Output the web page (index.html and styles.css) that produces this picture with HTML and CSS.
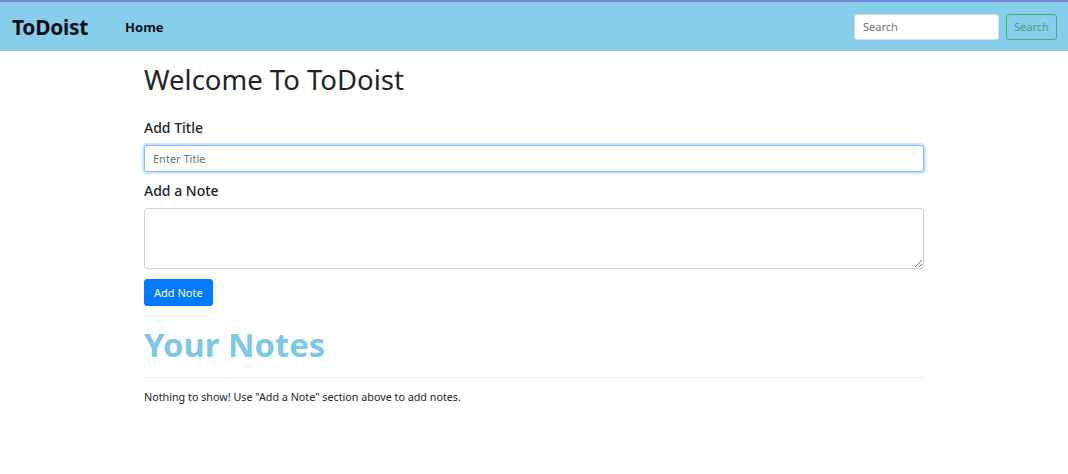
FILE: index.html
```html
<!DOCTYPE html>
<html lang="en">
<head>
<meta charset="utf-8">
<title>ToDoist</title>
<link rel="stylesheet" href="styles.css">
</head>
<body>
<nav class="navbar">
  <a class="brand" href="#">ToDoist</a>
  <a class="nav-link" href="#">Home</a>
  <form class="search">
    <input class="search-input" type="text" placeholder="Search">
    <button class="search-btn" type="button">Search</button>
  </form>
</nav>
<main class="container">
  <h1 class="title">Welcome To ToDoist</h1>
  <div class="group">
    <label class="label">Add Title</label>
    <input class="field field-focus" type="text" placeholder="Enter Title">
  </div>
  <div class="group group-note">
    <label class="label">Add a Note</label>
    <textarea class="field area"></textarea>
  </div>
  <button class="btn-primary" type="button">Add Note</button>
  <h2 class="notes-title">Your Notes</h2>
  <hr class="rule">
  <p class="empty">Nothing to show! Use "Add a Note" section above to add notes.</p>
</main>
</body>
</html>
```

FILE: styles.css
```css
* { box-sizing: border-box; }
body {
  margin: 0;
  font-family: "Noto Sans", "Open Sans", sans-serif;
  color: #212529;
  background: #fff;
}
.navbar {
  display: flex;
  align-items: center;
  height: 51px;
  border-top: 2px solid #7a88d8;
  background: #87ceeb;
  padding: 0 11px 0 12px;
}
.brand {
  font-size: 21px;
  font-weight: 700;
  color: #0b0f1a;
  text-decoration: none;
  margin-right: 37px;
  letter-spacing: -0.3px;
}
.nav-link {
  font-size: 13px;
  font-weight: 700;
  color: #0b0f1a;
  text-decoration: none;
}
.search {
  margin-left: auto;
  display: flex;
  gap: 7px;
}
.search-input {
  width: 145px;
  height: 26px;
  border: 1px solid #d6dde2;
  border-radius: 3px;
  padding: 0 8px;
  font-family: inherit;
  font-size: 11px;
  background: #fff;
}
.search-input::placeholder { color: #6c757d; }
.search-btn {
  width: 51px;
  height: 26px;
  border: 1px solid #3fae7f;
  border-radius: 3px;
  background: transparent;
  color: #3aa17a;
  font-family: inherit;
  font-size: 11px;
  padding: 0;
}
.container {
  width: 780px;
  margin: 0 auto;
}
.title {
  font-size: 27.5px;
  font-weight: 400;
  margin: 12px 0 22px;
  line-height: 1.2;
}
.group { margin-bottom: 9px; }
.group-note { margin-bottom: 10px; }
.label {
  display: block;
  font-size: 14px;
  font-weight: 500;
  margin-bottom: 8px;
}
.field {
  display: block;
  width: 100%;
  border: 1px solid #ced4da;
  border-radius: 3px;
  font-family: inherit;
  font-size: 11px;
  padding: 0 8px;
  color: #495057;
}
.field::placeholder { color: #6c757d; }
.field-focus {
  height: 27px;
  border-color: #80bdff;
  box-shadow: 0 0 0 2px rgba(0, 123, 255, 0.2);
  outline: none;
}
.area {
  height: 61px;
  resize: vertical;
}
.btn-primary {
  display: block;
  height: 27px;
  padding: 0 9px;
  border: 1px solid #007bff;
  border-radius: 3px;
  background: #007bff;
  color: #fff;
  font-family: inherit;
  font-size: 11px;
}
.notes-title {
  font-size: 32.8px;
  font-weight: 700;
  color: #7ec8e3;
  margin: 19px 0 13px;
  line-height: 1.2;
}
.rule {
  border: 0;
  border-top: 1px solid #eef0f2;
  margin: 0 0 12px;
}
.empty {
  font-size: 10.75px;
  margin: 0;
}
```
